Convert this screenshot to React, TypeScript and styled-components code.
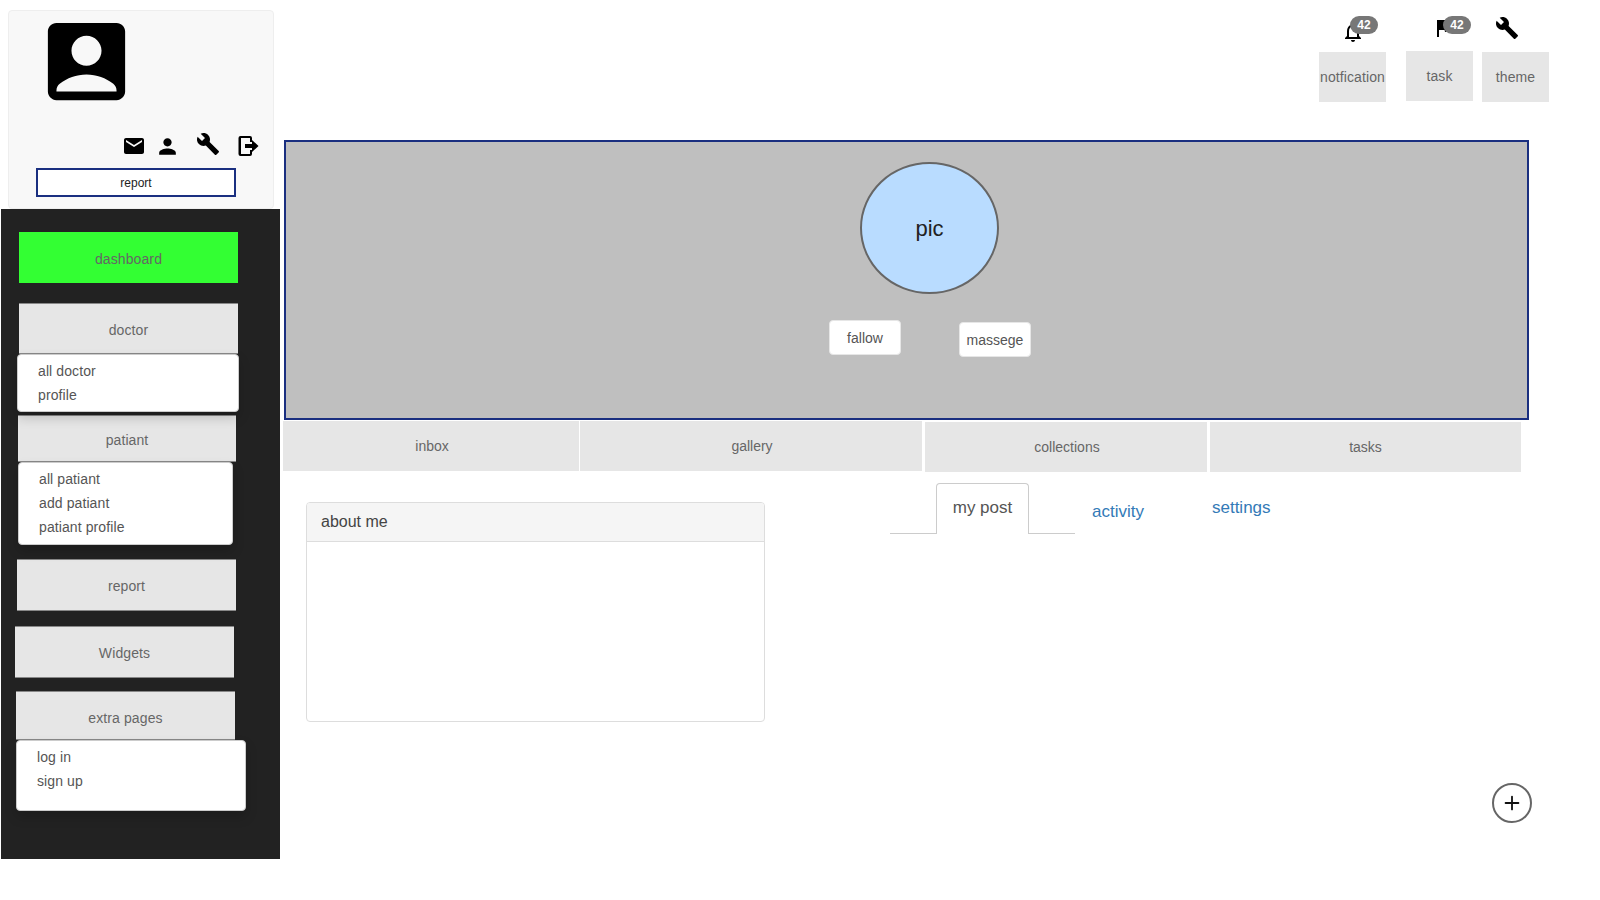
import React from "react";
import styled, { createGlobalStyle } from "styled-components";
import {
  MdAccountBox,
  MdBuild,
  MdEmail,
  MdFlag,
  MdNotificationsNone,
  MdPerson,
} from "react-icons/md";
import { FiPlus } from "react-icons/fi";

const GlobalStyle = createGlobalStyle`
  html, body {
    margin: 0;
    padding: 0;
    background: #fff;
    font-family: "Liberation Sans", Arial, sans-serif;
    font-size: 14px;
    color: #333;
  }
`;

const navy = "#1a2f80";

const Page = styled.div`
  display: flex;
  align-items: flex-start;
  width: 1600px;
  height: 900px;
  overflow: hidden;
`;

const LeftColumn = styled.aside`
  flex: none;
  width: 279px;
  margin: 0 1px;
  padding-top: 10px;
`;

const UserWell = styled.div`
  box-sizing: border-box;
  width: 266px;
  height: 199px;
  margin-left: 7px;
  padding: 13px 0 0 39px;
  background: #f8f8f8;
  border: 1px solid #eeeeee;
  border-radius: 4px;
`;

const Avatar = styled(MdAccountBox)`
  display: block;
  margin: -14px 0 0 -13px;
  color: #000;
`;

const UserIcons = styled.div`
  display: flex;
  align-items: center;
  height: 34px;
  margin: 16px 0 0 74px;
`;

const UserIcon = styled.span<{ $gap: number; $lift?: number }>`
  display: flex;
  margin-right: ${(p) => p.$gap}px;
  margin-bottom: ${(p) => p.$lift || 0}px;
  color: #000;
`;

const ReportBox = styled.div`
  box-sizing: border-box;
  width: 200px;
  height: 29px;
  margin: 5px 0 0 -12px;
  background: #fff;
  border: 2px solid ${navy};
  color: #222;
  font-size: 12px;
  line-height: 27px;
  text-align: center;
`;

const Sidebar = styled.nav`
  box-sizing: border-box;
  height: 650px;
  padding-top: 23px;
  background: #222222;
`;

const NavItem = styled.div<{
  $left: number;
  $w: number;
  $h: number;
  $top: number;
  $pad?: number;
  $active?: boolean;
}>`
  box-sizing: border-box;
  width: ${(p) => p.$w}px;
  height: ${(p) => p.$h}px;
  margin: ${(p) => p.$top}px 0 0 ${(p) => p.$left}px;
  padding-top: ${(p) => p.$pad ?? 2}px;
  background: ${(p) => (p.$active ? "#33ff33" : "#e6e6e6")};
  border-top: 1px solid ${(p) => (p.$active ? "#33ff33" : "#888")};
  border-bottom: 1px solid ${(p) => (p.$active ? "#33ff33" : "#888")};
  color: #666;
  letter-spacing: 0.1px;
  display: flex;
  align-items: center;
  justify-content: center;
`;

const Dropdown = styled.ul<{
  $left: number;
  $w: number;
  $h: number;
}>`
  box-sizing: border-box;
  position: relative;
  width: ${(p) => p.$w}px;
  height: ${(p) => p.$h}px;
  margin: 0 0 0 ${(p) => p.$left}px;
  padding: 4px 0 0 20px;
  list-style: none;
  background: #fff;
  border: 1px solid #ccc;
  border-radius: 4px;
  box-shadow: 0 6px 12px rgba(0, 0, 0, 0.175);
`;

const DropdownItem = styled.li`
  height: 24px;
  line-height: 24px;
  color: #555;
  letter-spacing: 0.1px;
`;

const Main = styled.main`
  flex: none;
  width: 1319px;
`;

const Header = styled.header`
  display: flex;
  height: 140px;
  padding-left: 1038px;
`;

const Tool = styled.div<{ $w: number; $top: number }>`
  position: relative;
  width: ${(p) => p.$w}px;
  padding-top: ${(p) => p.$top}px;
`;

const ToolIcon = styled.span<{ $left: number; $h: number }>`
  display: flex;
  align-items: flex-start;
  height: ${(p) => p.$h}px;
  margin-left: ${(p) => p.$left}px;
  color: #000;
`;

const ToolButton = styled.div`
  width: 67px;
  height: 50px;
  margin-top: 8px;
  background: #e6e6e6;
  color: #666;
  letter-spacing: 0.1px;
  line-height: 50px;
  text-align: center;
  white-space: nowrap;
`;

const Badge = styled.span<{ $left: number }>`
  position: absolute;
  top: 16px;
  left: ${(p) => p.$left}px;
  width: 28px;
  height: 18px;
  border-radius: 9px;
  background: #777;
  color: #fff;
  font-size: 12px;
  font-weight: 700;
  line-height: 18px;
  text-align: center;
`;

const Hero = styled.section`
  box-sizing: border-box;
  width: 1245px;
  height: 280px;
  margin-left: 3px;
  padding-top: 20px;
  background: #bfbfbf;
  border: 2px solid ${navy};
`;

const Pic = styled.div`
  box-sizing: border-box;
  width: 139px;
  height: 132px;
  margin-left: 574px;
  border: 2px solid #666;
  border-radius: 50%;
  background: #b9dcff;
  color: #222;
  font-size: 22px;
  line-height: 130px;
  text-align: center;
`;

const HeroActions = styled.div`
  display: flex;
  align-items: flex-start;
  margin: 26px 0 0 543px;
`;

const HeroButton = styled.button<{ $top: number; $w: number; $gap: number }>`
  box-sizing: border-box;
  width: ${(p) => p.$w}px;
  height: 35px;
  margin: ${(p) => p.$top}px ${(p) => p.$gap}px 0 0;
  padding: 0;
  background: #fff;
  border: 1px solid #e6e6e6;
  border-radius: 4px;
  color: #555;
  font: 14px "Liberation Sans", Arial, sans-serif;
`;

const TabBar = styled.div`
  display: flex;
  align-items: flex-start;
  margin: 1px 0 0 2px;
`;

const BarTab = styled.div<{ $w: number; $top: number; $gap: number; $pad?: number }>`
  box-sizing: border-box;
  width: ${(p) => p.$w}px;
  height: 50px;
  margin: ${(p) => p.$top}px ${(p) => p.$gap}px 0 0;
  padding-left: ${(p) => p.$pad || 0}px;
  background: #e6e6e6;
  color: #666;
  line-height: 50px;
  text-align: center;
`;

const Content = styled.div`
  display: flex;
  align-items: flex-start;
`;

const Panel = styled.section`
  box-sizing: border-box;
  width: 459px;
  height: 220px;
  margin: 30px 0 0 25px;
  background: #fff;
  border: 1px solid #ddd;
  border-radius: 4px;
  overflow: hidden;
`;

const PanelHeading = styled.div`
  box-sizing: border-box;
  height: 39px;
  padding-left: 14px;
  background: #f5f5f5;
  border-bottom: 1px solid #ddd;
  color: #444;
  font-size: 16px;
  line-height: 38px;
`;

const Tabs = styled.div`
  display: flex;
  align-items: flex-start;
  margin: 11px 0 0 125px;
`;

const TabLine = styled.div<{ $w: number }>`
  width: ${(p) => p.$w}px;
  height: 50px;
  border-bottom: 1px solid #ccc;
`;

const ActiveTab = styled.div`
  box-sizing: border-box;
  width: 93px;
  height: 51px;
  background: #fff;
  border: 1px solid #ccc;
  border-bottom: 0;
  border-radius: 4px 4px 0 0;
  color: #555;
  font-size: 17px;
  line-height: 48px;
  text-align: center;
`;

const TabLink = styled.a<{ $left: number; $top: number }>`
  margin: ${(p) => p.$top}px 0 0 ${(p) => p.$left}px;
  color: #337ab7;
  font-size: 17px;
  line-height: 20px;
`;

const Fab = styled.button`
  position: absolute;
  left: 1492px;
  top: 783px;
  display: flex;
  align-items: center;
  justify-content: center;
  box-sizing: border-box;
  width: 40px;
  height: 40px;
  padding: 0;
  background: #fff;
  border: 2px solid #666;
  border-radius: 50%;
  color: #111;
`;

const ExitIcon = () => (
  <svg width="24" height="24" viewBox="0 0 24 24" fill="#000">
    <path d="M4.5 2H14a2 2 0 0 1 2 2v4h-2V4H5v16h9v-4h2v4a2 2 0 0 1-2 2H4.5a2 2 0 0 1-2-2V4a2 2 0 0 1 2-2z" />
    <path d="M9 10h7V6l6.5 6-6.5 6v-4H9z" />
  </svg>
);

const App = () => {
  return (
    <Page>
      <GlobalStyle />
      <LeftColumn>
        <UserWell>
          <Avatar size={103} />
          <UserIcons>
            <UserIcon $gap={9}>
              <MdEmail size={24} />
            </UserIcon>
            <UserIcon $gap={16}>
              <MdPerson size={25} />
            </UserIcon>
            <UserIcon $gap={16} $lift={5}>
              <MdBuild size={24} />
            </UserIcon>
            <UserIcon $gap={0}>
              <ExitIcon />
            </UserIcon>
          </UserIcons>
          <ReportBox>report</ReportBox>
        </UserWell>
        <Sidebar>
          <NavItem $left={18} $w={219} $h={51} $top={0} $active>
            dashboard
          </NavItem>
          <NavItem $left={18} $w={219} $h={51} $top={20}>
            doctor
          </NavItem>
          <Dropdown $left={16} $w={222} $h={58}>
            <DropdownItem>all doctor</DropdownItem>
            <DropdownItem>profile</DropdownItem>
          </Dropdown>
          <NavItem $left={17} $w={218} $h={47} $top={3}>
            patiant
          </NavItem>
          <Dropdown $left={17} $w={215} $h={83}>
            <DropdownItem>all patiant</DropdownItem>
            <DropdownItem>add patiant</DropdownItem>
            <DropdownItem>patiant profile</DropdownItem>
          </Dropdown>
          <NavItem $left={16} $w={219} $h={52} $top={14}>
            report
          </NavItem>
          <NavItem $left={14} $w={219} $h={52} $top={15}>
            Widgets
          </NavItem>
          <NavItem $left={15} $w={219} $h={49} $top={13} $pad={4}>
            extra pages
          </NavItem>
          <Dropdown $left={15} $w={230} $h={71}>
            <DropdownItem>log in</DropdownItem>
            <DropdownItem>sign up</DropdownItem>
          </Dropdown>
        </Sidebar>
      </LeftColumn>
      <Main>
        <Header>
          <Tool $w={87} $top={20}>
            <ToolIcon $left={22} $h={24}>
              <MdNotificationsNone size={24} />
            </ToolIcon>
            <ToolButton>notfication</ToolButton>
            <Badge $left={31}>42</Badge>
          </Tool>
          <Tool $w={76} $top={16}>
            <ToolIcon $left={26} $h={27}>
              <MdFlag size={24} />
            </ToolIcon>
            <ToolButton>task</ToolButton>
            <Badge $left={37}>42</Badge>
          </Tool>
          <Tool $w={67} $top={16}>
            <ToolIcon $left={13} $h={28}>
              <MdBuild size={24} />
            </ToolIcon>
            <ToolButton>theme</ToolButton>
          </Tool>
        </Header>
        <Hero>
          <Pic>pic</Pic>
          <HeroActions>
            <HeroButton $top={0} $w={72} $gap={58}>
              fallow
            </HeroButton>
            <HeroButton $top={2} $w={72} $gap={0}>
              massege
            </HeroButton>
          </HeroActions>
        </Hero>
        <TabBar>
          <BarTab $w={296} $top={0} $gap={1} $pad={2}>
            inbox
          </BarTab>
          <BarTab $w={342} $top={0} $gap={3} $pad={2}>
            gallery
          </BarTab>
          <BarTab $w={282} $top={1} $gap={3} $pad={2}>
            collections
          </BarTab>
          <BarTab $w={311} $top={1} $gap={0}>
            tasks
          </BarTab>
        </TabBar>
        <Content>
          <Panel>
            <PanelHeading>about me</PanelHeading>
          </Panel>
          <Tabs>
            <TabLine $w={46} />
            <ActiveTab>my post</ActiveTab>
            <TabLine $w={46} />
            <TabLink $left={17} $top={19}>
              activity
            </TabLink>
            <TabLink $left={68} $top={15}>
              settings
            </TabLink>
          </Tabs>
        </Content>
      </Main>
      <Fab aria-label="add">
        <FiPlus size={22} />
      </Fab>
    </Page>
  );
};

export default App;
